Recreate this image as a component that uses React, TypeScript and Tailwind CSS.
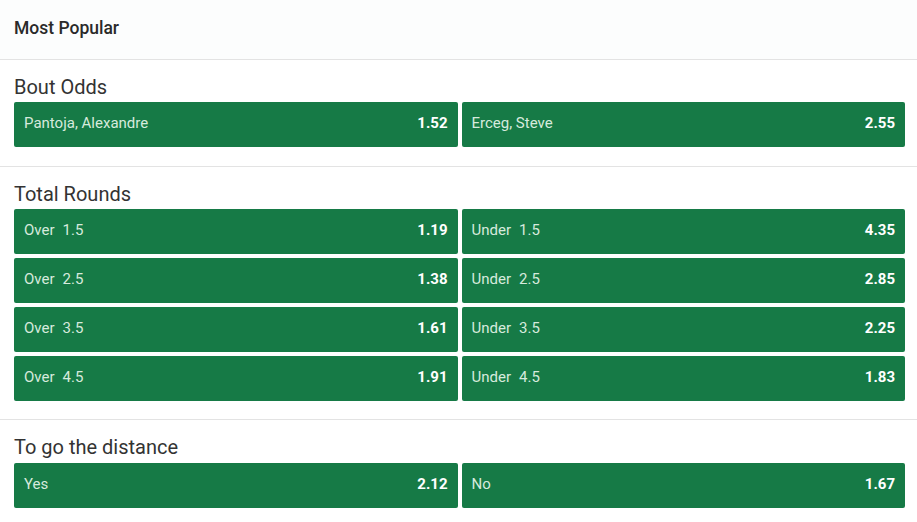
import React from "react";

type Sel = { label: string; line?: string; odds: string };

const Btn = ({ s }: { s: Sel }) => (
  <div className="flex h-[45px] items-center justify-between rounded-[2px] bg-[#167a46] px-[10px] pb-[2px] text-[15px]">
    <span className="text-[#d6eadd]">
      {s.label}
      {s.line && <span className="ml-2">{s.line}</span>}
    </span>
    <span className="font-bold text-white">{s.odds}</span>
  </div>
);

const Section = ({ title, rows, pb, mb }: { title: string; rows: Sel[][]; pb: string; mb: string }) => (
  <div className={`pl-[14px] pr-[12px] pt-[15px] ${pb}`}>
    <div className={`h-6 text-[20px] leading-6 text-[#333333] ${mb}`}>{title}</div>
    <div className="grid grid-cols-2 gap-1">
      {rows.flat().map((s, i) => (
        <Btn key={i} s={s} />
      ))}
    </div>
  </div>
);

export default function App() {
  return (
    <div className="w-[917px] bg-white" style={{ fontFamily: "Roboto, 'Liberation Sans', sans-serif" }}>
      <div className="flex h-[60px] items-center border-b border-[#e3e3e3] bg-[#fcfdfd] pb-[2px] pl-[14px] text-[17.5px] font-medium text-[#2a2a2a]">
        Most Popular
      </div>
      <Section
        title="Bout Odds"
        mb="mb-[3px]"
        pb="pb-[19px] border-b border-[#e3e3e3]"
        rows={[[{ label: "Pantoja, Alexandre", odds: "1.52" }, { label: "Erceg, Steve", odds: "2.55" }]]}
      />
      <Section
        title="Total Rounds"
        mb="mb-[3px]"
        pb="pb-[18px] border-b border-[#e3e3e3]"
        rows={[
          [{ label: "Over", line: "1.5", odds: "1.19" }, { label: "Under", line: "1.5", odds: "4.35" }],
          [{ label: "Over", line: "2.5", odds: "1.38" }, { label: "Under", line: "2.5", odds: "2.85" }],
          [{ label: "Over", line: "3.5", odds: "1.61" }, { label: "Under", line: "3.5", odds: "2.25" }],
          [{ label: "Over", line: "4.5", odds: "1.91" }, { label: "Under", line: "4.5", odds: "1.83" }],
        ]}
      />
      <Section
        title="To go the distance"
        mb="mb-[4px]"
        pb="pb-[14px]"
        rows={[[{ label: "Yes", odds: "2.12" }, { label: "No", odds: "1.67" }]]}
      />
    </div>
  );
}
